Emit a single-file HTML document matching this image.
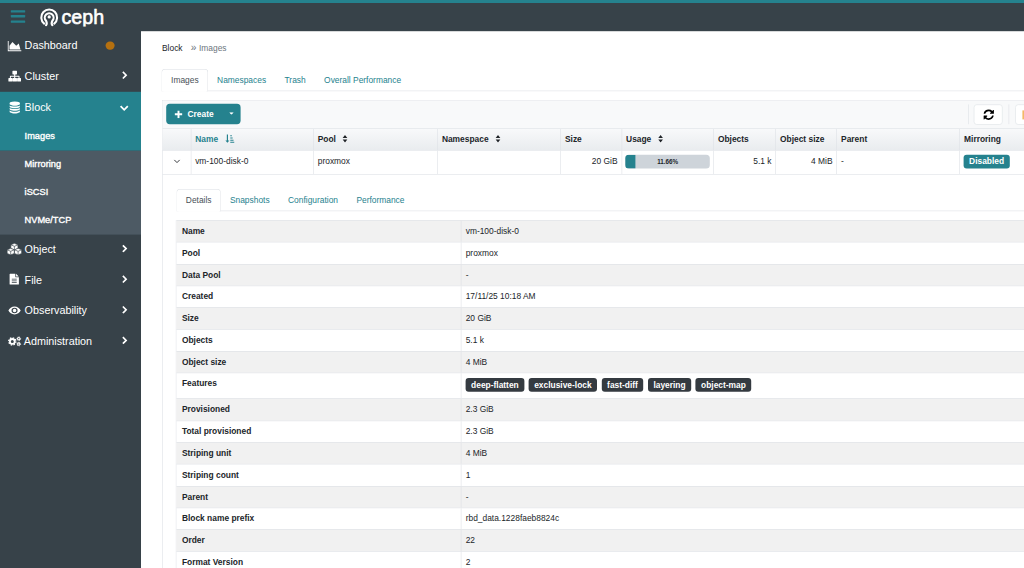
<!DOCTYPE html>
<html lang="en">
<head>
<meta charset="utf-8">
<title>Ceph</title>
<style>
*{box-sizing:border-box;margin:0;padding:0}
html,body{width:1024px;height:568px;overflow:hidden;background:#fff}
body{font-family:"Liberation Sans",sans-serif;font-size:14px;line-height:21px;color:#212529}
#app{position:absolute;left:0;top:0;width:1707px;height:947px;transform:scale(.6);transform-origin:0 0;overflow:hidden;background:#fff}

/* top navbar */
#nav{z-index:5;position:absolute;left:0;top:0;width:1707px;height:51.7px;background:#374249;border-top:5px solid #25828e}
#brand{z-index:7;position:absolute;left:0;top:5px;width:235px;height:46px}
#burger{position:absolute;left:18px;top:11.8px;width:24px;height:21px}
#burger i{position:absolute;left:0;width:24px;height:4px;background:#25828e;border-radius:1px}
#logo{position:absolute;left:66px;top:7px}

/* sidebar */
#side{z-index:6;border-top:5px solid #25828e;position:absolute;left:0;top:0;padding-top:46px;width:234.500px;height:947px;background:#374249;color:#fff}
#actbg{position:absolute;left:0;top:148px;width:235px;height:97.7px;background:#25828e}
#subbg{position:absolute;left:0;top:245.5px;width:235px;height:140.2px;background:#4d5a64}
.ni{position:relative;height:51px;font-size:18px;line-height:51px;padding-left:41px;white-space:nowrap}
.ni svg.ic{position:absolute;fill:#fff;overflow:visible}
.ni svg.ch{position:absolute;left:201.500px;top:16px;width:11px;height:14.700px;fill:none;stroke:#fff;stroke-width:3}
.sub{position:relative}
.si{height:46.67px;line-height:46.67px;padding-left:41px;font-size:15.4px;-webkit-text-stroke:.6px #fff}
#dot{position:absolute;left:176px;top:17.5px;width:14.5px;height:14.5px;border-radius:50%;background:#b5700f}

/* main content (coordinates relative to #main: left 235, top 51) */
#main{position:absolute;left:235px;top:51px;width:1472px;height:896px;background:#fff}
#bc{position:absolute;left:35px;top:18.6px;font-size:14px;line-height:21px;color:#212529;white-space:nowrap}
#bc .sep{color:#6c757d;margin:0 4.5px 0 13.5px;font-size:17px;line-height:21px;display:inline-block;vertical-align:top;position:relative;top:-1px}
#bc .cur{color:#6c757d}
.tabs{position:absolute;height:37.3px;border-bottom:1px solid #dee2e6;white-space:nowrap;font-size:0}
.tabs span{display:inline-block;font-size:14px;height:37.3px;line-height:21px;padding:8.3px 14px 7px;border:1px solid transparent;border-bottom:0;border-radius:6px 6px 0 0;color:#25828e;margin-right:.7px}
.tabs span.on{color:#495057;background:#fff;border-color:#d9dde2;height:38.3px;padding-left:15px;padding-right:15px;margin-left:-1px;margin-right:-.3px}
#panel{position:absolute;left:35.2px;top:115.8px;width:1500px;height:900px;border:1px solid #dee2e6;background:#fff}
#tbar{position:absolute;left:0;top:0;width:100%;height:47px;background:#f8f9fa}
#create{position:absolute;left:5.5px;top:5.6px;width:124px;height:34px;border-radius:6px;background:#25828e;color:#fff;font-weight:bold;font-size:14px;line-height:34px}
#create .plus{position:absolute;left:14.5px;top:10.6px;width:13px;height:13px;fill:#fff}
#create .lbl{position:absolute;left:35.8px;top:0}
#create .caret{position:absolute;left:105.5px;top:13.5px;width:7.5px;height:4.5px;fill:#fff}
.vsep{position:absolute;top:6px;width:1px;height:33px;background:#dee2e6}
.tbtn{position:absolute;top:6px;width:48px;height:34px;background:#fff;border:1px solid #dee2e6;border-radius:5px}
.tbtn .rf{position:absolute;left:15px;top:6px;width:17.5px;height:20.4px;fill:#000}
.tbtn .or{position:absolute;left:11.5px;top:9px;width:14px;height:15px;background:#f3b866}

/* data table */
#thead{position:absolute;left:0;top:46.6px;width:100%;height:37px;background:linear-gradient(#f8f9fa,#e9ecef);border-top:1px solid #dee2e6;border-bottom:1px solid #dee2e6}
#trow{position:absolute;left:0;top:83.6px;width:100%;height:39.2px;border-bottom:1px solid #dee2e6}
.c{position:absolute;top:0;height:100%;border-left:1px solid #dee2e6;padding:0 6.600px;white-space:nowrap;font-size:14px}
#thead .c{font-weight:bold;line-height:33.4px;color:#212529}
#thead .c.srt{color:#25828e}
#trow .c{line-height:21px;padding-top:6.2px}
.r{text-align:right}
.so{display:inline-block;width:10px;height:14.5px;margin-left:10.5px;vertical-align:-2px;fill:#212529}
.sa{display:inline-block;width:16.5px;height:16.5px;margin-left:11.5px;vertical-align:-3.5px;fill:#25828e}
.cd{position:absolute;left:18px;top:13.6px;width:12px;height:8px;fill:none;stroke:#212529;stroke-width:1.5}
.pg{position:relative;left:-1px;width:140.7px;height:23px;margin-top:.8px;border-radius:6px;background:#ced4da;overflow:hidden}
.pg i{position:absolute;left:0;top:0;width:11.66%;height:100%;background:#25828e}
.pg b{position:absolute;left:0;top:0;width:100%;text-align:center;font-size:10.5px;line-height:23px;color:#212529}

/* details */
#dtabs{left:23.5px;top:146.8px;width:1500px}
#dt{position:absolute;left:22.2px;top:199.3px;width:1421.3px;border-left:1px solid #e3e6ea}
.row{position:relative;height:36.33px;border-top:1px solid #dee2e6;line-height:21px;white-space:nowrap}
.row.g{background:#f1f1f1}
.row b{position:absolute;left:8.8px;top:7px}
.row span.v{position:absolute;left:481.8px;top:7px}
.row i.d{position:absolute;left:473.6px;top:0;width:1px;height:100%;background:#dee2e6}
.bd{display:inline-block;vertical-align:top;background:#343a40;color:#fff;font-weight:bold;font-size:14px;line-height:23.2px;height:23.2px;padding:0 9px;border-radius:5px;margin-right:7.8px}
.bd.teal{background:#25828e;padding:0 9.200px;margin:0 0 0 -.8px;height:23.7px;line-height:23.7px}
.row .bd{margin-top:.5px}
</style>
</head>
<body>
<div id="app">
 <div id="nav"></div>
 <div id="brand">
  <div id="burger"><i style="top:0"></i><i style="top:8.4px"></i><i style="top:16.8px"></i></div>
  <svg id="logo" width="112" height="31.5" viewBox="0 0 112 31.5">
   <g fill="none" stroke="#fff" stroke-width="3.5" stroke-linecap="round">
    <path d="M7.600 27.300A13.200 13.200 0 1 1 24.400 27.300"/>
    <path d="M10.700 30.200C13 27.500 12 25 10.800 22.600A7.300 7.300 0 1 1 21.200 22.600C20 25 19 27.500 21.300 30.200"/>
   </g>
   <circle cx="16" cy="16.300" r="2.700" fill="#fff"/>
   <text x="36.500" y="27.300" font-family="Liberation Sans, sans-serif" font-size="33" fill="#fff" stroke="#fff" stroke-width="1" stroke-linejoin="round" textLength="71" lengthAdjust="spacingAndGlyphs">ceph</text>
  </svg>
 </div>

 <div id="side">
  <div id="subbg"></div><div id="actbg"></div>
  <div class="ni"><svg class="ic" style="left:12.500px;top:16px;width:22.500px;height:19.700px" viewBox="0 0 2048 1792"><path d="M2048 1536v128H0V128h128v1408h1920zM1664 512l256 896H256V832l448-576 576 576z"/></svg>Dashboard<span id="dot"></span></div>
  <div class="ni"><svg class="ic" style="left:13.500px;top:16px;width:21px;height:18px" viewBox="0 0 21 18"><path d="M7.600 0h5.800a.9.900 0 0 1 .9.900v4.200a.9.900 0 0 1-.9.900h-2v2.200h6.100a1 1 0 0 1 1 1V12h1.600a.9.900 0 0 1 .9.900v4.200a.9.900 0 0 1-.9.900h-4.700a.9.900 0 0 1-.9-.9v-4.200a.9.900 0 0 1 .9-.9h1.500V9.800h-5.500V12h2a.9.900 0 0 1 .9.900v4.200a.9.900 0 0 1-.9.900H7.600a.9.900 0 0 1-.9-.9v-4.200a.9.900 0 0 1 .9-.9h2V9.800H4.100V12h1.500a.9.900 0 0 1 .9.900v4.200a.9.900 0 0 1-.9.900H.9a.9.900 0 0 1-.9-.9v-4.200A.9.900 0 0 1 .9 12h1.600V9.200a1 1 0 0 1 1-1h6.100V6h-2a.9.900 0 0 1-.9-.9V.9a.9.900 0 0 1 .9-.9z"/></svg>Cluster<svg class="ch" viewBox="0 0 12 16"><path d="M3 2l6 6-6 6"/></svg></div>
  <div class="ni" style="top:1px"><svg class="ic" style="left:15.500px;top:14.500px;width:17.200px;height:20px" viewBox="0 0 1536 1792"><path d="M768 768q237 0 443-43t325-127v170q0 69-103 128t-280 93.500-385 34.500-385-34.500T103 896 0 768V598q119 84 325 127t443 43zm0 768q237 0 443-43t325-127v170q0 69-103 128t-280 93.500-385 34.500-385-34.500-280-93.500T0 1536v-170q119 84 325 127t443 43zm0-384q237 0 443-43t325-127v170q0 69-103 128t-280 93.500-385 34.500-385-34.500-280-93.500T0 1152V982q119 84 325 127t443 43zM768 0q208 0 385 34.500t280 93.500 103 128v128q0 69-103 128t-280 93.500T768 640t-385-34.500T103 512 0 384V256q0-69 103-128T383 34.500 768 0z"/></svg>Block<svg class="ch" viewBox="0 0 16 12" style="left:199px;width:16px;height:12px;top:19.500px"><path d="M2 3l6 6 6-6"/></svg></div>
  <div class="sub">
   <div class="si">Images</div>
   <div class="si">Mirroring</div>
   <div class="si">iSCSI</div>
   <div class="si">NVMe/TCP</div>
  </div>
  <div class="ni"><svg class="ic" style="left:10.800px;top:14.300px;width:26px;height:20px" viewBox="0 0 24 18.500"><g fill="#fff" stroke="#374249" stroke-width="1" stroke-linejoin="round"><path d="M12 .5l5.500 2.300v5.600L12 10.700 6.500 8.400V2.800z"/><path d="M6.500 2.800L12 5.100l5.500-2.300M12 5.100v5.600" fill="none"/><path d="M6.300 8.200l5.500 2.300v5.600L6.300 18.400.8 16.100v-5.600z"/><path d="M.8 10.500l5.500 2.300 5.500-2.300M6.300 12.800v5.600" fill="none"/><path d="M17.700 8.200l5.500 2.300v5.600l-5.500 2.300-5.500-2.300v-5.600z"/><path d="M12.200 10.500l5.500 2.300 5.500-2.300M17.700 12.800v5.600" fill="none"/></g></svg>Object<svg class="ch" viewBox="0 0 12 16"><path d="M3 2l6 6-6 6"/></svg></div>
  <div class="ni"><svg class="ic" style="left:15.800px;top:14.500px;width:15.500px;height:18.500px" viewBox="0 0 17 20"><path d="M1 0h9.500v5.500a1 1 0 0 0 1 1H17V19a1 1 0 0 1-1 1H1a1 1 0 0 1-1-1V1a1 1 0 0 1 1-1zm10.800.3L16.700 5.200H11.800zM4 9.300v1.400h9V9.300zm0 3v1.400h9v-1.400zm0 3v1.400h9v-1.400z" fill-rule="evenodd"/></svg>File<svg class="ch" viewBox="0 0 12 16"><path d="M3 2l6 6-6 6"/></svg></div>
  <div class="ni"><svg class="ic" style="left:13.600px;top:18.500px;width:20.500px;height:13px" viewBox="0 0 20.500 14.500" preserveAspectRatio="none"><path d="M10.250 0C15 0 18.800 3.400 20.500 7.250 18.800 11.100 15 14.500 10.250 14.500S1.700 11.100 0 7.250C1.700 3.400 5.500 0 10.250 0zm0 2.200A5.050 5.050 0 1 0 10.250 12.300 5.050 5.050 0 1 0 10.250 2.200zm0 2a3.050 3.050 0 1 1 0 6.100 3.050 3.050 0 1 1 0-6.100zm-1 .9a1.600 1.600 0 0 0-1.100 2.100 1.300 1.300 0 0 1 1.100-2.100z" fill-rule="evenodd"/></svg>Observability<svg class="ch" viewBox="0 0 12 16"><path d="M3 2l6 6-6 6"/></svg></div>
  <div class="ni" style="padding-left:39.500px"><svg class="ic" style="left:13.500px;top:17.500px;width:21.500px;height:16px" viewBox="0 0 21.500 16"><g fill="none" stroke="#fff"><circle cx="6.500" cy="8" r="4" stroke-width="3"/><circle cx="6.500" cy="8" r="6" stroke-width="2.200" stroke-dasharray="2.500 2.200"/><circle cx="17.300" cy="3.500" r="2" stroke-width="1.800"/><circle cx="17.300" cy="3.500" r="3.100" stroke-width="1.300" stroke-dasharray="1.400 1.400"/><circle cx="17.300" cy="12.500" r="2" stroke-width="1.800"/><circle cx="17.300" cy="12.500" r="3.100" stroke-width="1.300" stroke-dasharray="1.400 1.400"/></g></svg>Administration<svg class="ch" viewBox="0 0 12 16"><path d="M3 2l6 6-6 6"/></svg></div>
 </div>
  <div id="main">
   <div id="bc">Block<span class="sep">&raquo;</span><span class="cur">Images</span></div>
   <div class="tabs" style="left:35.2px;top:63.7px;width:1500px"><span class="on">Images</span><span>Namespaces</span><span>Trash</span><span>Overall Performance</span></div>
   <div id="panel">
    <div id="tbar">
     <div id="create"><svg class="plus" viewBox="0 0 12 12"><path d="M4.500 0h3v4.500H12v3H7.500V12h-3V7.500H0v-3h4.500z"/></svg><span class="lbl">Create</span><svg class="caret" viewBox="0 0 10 6"><path d="M0 0h10L5 6z"/></svg></div>
     <i class="vsep" style="left:1342.7px"></i>
     <div class="tbtn" style="left:1352.2px"><svg class="rf" viewBox="0 0 1536 1792"><path d="M1511 1056q0 5-1 7-64 268-268 434.500T764 1664q-146 0-282.500-55T238 1452l-129 129q-19 19-45 19t-45-19-19-45v-448q0-26 19-45t45-19h448q26 0 45 19t19 45-19 45l-137 137q71 66 161 102t187 36q134 0 250-65t186-179q11-17 53-117 8-23 30-23h192q13 0 22.500 9.500t9.500 22.500zM1536 256v448q0 26-19 45t-45 19h-448q-26 0-45-19t-19-45 19-45l138-138Q969 384 768 384q-134 0-250 65T332 628q-11 17-53 117-8 23-30 23H50q-13 0-22.500-9.500T18 736v-7q65-268 270-434.500T768 128q146 0 284 55.500T1297 340l130-129q19-19 45-19t45 19 19 45z"/></svg></div>
     <i class="vsep" style="left:1409.5px"></i>
     <div class="tbtn" style="left:1420.5px;width:60px"><i class="or"></i></div>
    </div>
    <div id="thead"><div class="c" style="left:0.0px;width:46.5px;border-left:0"></div><div class="c srt" style="left:46.5px;width:204.3px">Name<svg class="sa" viewBox="0 0 16 16"><path d="M3.100 1h2v10.500h2.400L4.100 15.400.7 11.500h2.400zM9 2.500h2.600v1.700H9zM9 6.300h4v1.700H9zM9 10.100h5.500v1.700H9zM9 13.400h7v1.700H9z" transform="scale(.95)"/></svg></div><div class="c" style="left:250.8px;width:206.8px">Pool<svg class="so" viewBox="0 0 10 16"><path d="M5 1.2L9.300 6.800H.7zM5 14.800L.7 9.200h8.600z"/></svg></div><div class="c" style="left:457.7px;width:205.2px">Namespace<svg class="so" viewBox="0 0 10 16"><path d="M5 1.2L9.300 6.800H.7zM5 14.800L.7 9.200h8.600z"/></svg></div><div class="c" style="left:662.8px;width:101.8px">Size</div><div class="c" style="left:764.7px;width:153.0px">Usage<svg class="so" viewBox="0 0 10 16"><path d="M5 1.2L9.300 6.800H.7zM5 14.800L.7 9.200h8.600z"/></svg></div><div class="c" style="left:917.7px;width:103.5px">Objects</div><div class="c" style="left:1021.2px;width:101.8px">Object size</div><div class="c" style="left:1123.0px;width:205.0px">Parent</div><div class="c" style="left:1328.0px;width:117.5px">Mirroring</div></div>
    <div id="trow"><div class="c" style="left:0.0px;width:46.5px;border-left:0"><svg class="cd" viewBox="0 0 12 8"><path d="M1.500 1.500L6 6l4.500-4.500"/></svg></div><div class="c" style="left:46.5px;width:204.3px">vm-100-disk-0</div><div class="c" style="left:250.8px;width:206.8px">proxmox</div><div class="c" style="left:457.7px;width:205.2px"></div><div class="c r" style="left:662.8px;width:101.8px">20 GiB</div><div class="c" style="left:764.7px;width:153.0px"><div class="pg"><i></i><b>11.66%</b></div></div><div class="c r" style="left:917.7px;width:103.5px">5.1 k</div><div class="c r" style="left:1021.2px;width:101.8px">4 MiB</div><div class="c" style="left:1123.0px;width:205.0px">-</div><div class="c" style="left:1328.0px;width:117.5px"><span class="bd teal">Disabled</span></div></div>
    <div class="tabs" id="dtabs"><span class="on">Details</span><span>Snapshots</span><span>Configuration</span><span>Performance</span></div>
    <div id="dt">
     <div class="row g"><b>Name</b><i class="d"></i><span class="v">vm-100-disk-0</span></div>
     <div class="row"><b>Pool</b><i class="d"></i><span class="v">proxmox</span></div>
     <div class="row g"><b>Data Pool</b><i class="d"></i><span class="v">-</span></div>
     <div class="row"><b>Created</b><i class="d"></i><span class="v">17/11/25 10:18 AM</span></div>
     <div class="row g"><b>Size</b><i class="d"></i><span class="v">20 GiB</span></div>
     <div class="row"><b>Objects</b><i class="d"></i><span class="v">5.1 k</span></div>
     <div class="row g"><b>Object size</b><i class="d"></i><span class="v">4 MiB</span></div>
     <div class="row" style="height:43px"><b>Features</b><i class="d"></i><span class="v"><span class="bd">deep-flatten</span><span class="bd">exclusive-lock</span><span class="bd">fast-diff</span><span class="bd">layering</span><span class="bd">object-map</span></span></div>
     <div class="row g"><b>Provisioned</b><i class="d"></i><span class="v">2.3 GiB</span></div>
     <div class="row"><b>Total provisioned</b><i class="d"></i><span class="v">2.3 GiB</span></div>
     <div class="row g"><b>Striping unit</b><i class="d"></i><span class="v">4 MiB</span></div>
     <div class="row"><b>Striping count</b><i class="d"></i><span class="v">1</span></div>
     <div class="row g"><b>Parent</b><i class="d"></i><span class="v">-</span></div>
     <div class="row"><b>Block name prefix</b><i class="d"></i><span class="v">rbd_data.1228faeb8824c</span></div>
     <div class="row g"><b>Order</b><i class="d"></i><span class="v">22</span></div>
     <div class="row"><b>Format Version</b><i class="d"></i><span class="v">2</span></div>
     <div class="row g"><b>Snapshot count</b><i class="d"></i><span class="v">0</span></div>
    </div>
   </div>
  </div>
 </div>
</body>
</html>
